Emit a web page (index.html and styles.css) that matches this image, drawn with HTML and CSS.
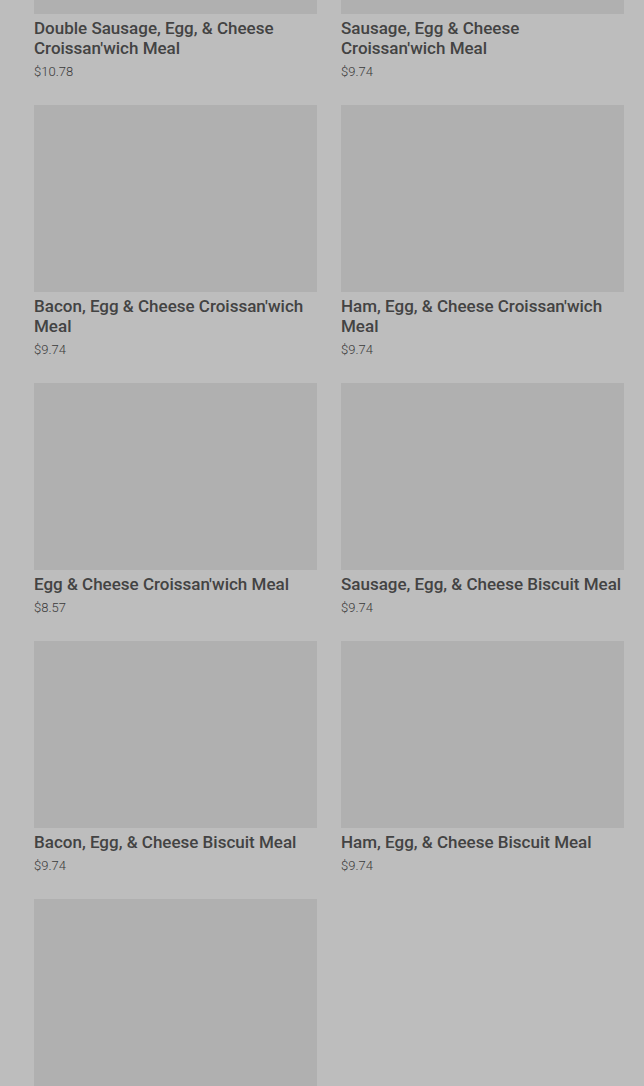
FILE: index.html
```html
<!DOCTYPE html>
<html lang="en">

<head>
    <meta charset="UTF-8">
    <meta name="viewport" content="width=device-width, initial-scale=1.0">
    <title>Breakfast Meals</title>
    <link rel="stylesheet" href="styles.css">
</head>

<body>

<div class="menu">
    <div class="item">
        <div class="photo"></div>
        <h3>Double Sausage, Egg, &amp; Cheese Croissan'wich Meal</h3>
        <p class="price">$10.78</p>
    </div>
    <div class="item">
        <div class="photo"></div>
        <h3>Sausage, Egg &amp; Cheese Croissan'wich Meal</h3>
        <p class="price">$9.74</p>
    </div>
    <div class="item">
        <div class="photo"></div>
        <h3>Bacon, Egg &amp; Cheese Croissan'wich Meal</h3>
        <p class="price">$9.74</p>
    </div>
    <div class="item">
        <div class="photo"></div>
        <h3>Ham, Egg, &amp; Cheese Croissan'wich Meal</h3>
        <p class="price">$9.74</p>
    </div>
    <div class="item">
        <div class="photo"></div>
        <h3>Egg &amp; Cheese Croissan'wich Meal</h3>
        <p class="price">$8.57</p>
    </div>
    <div class="item">
        <div class="photo"></div>
        <h3>Sausage, Egg, &amp; Cheese Biscuit Meal</h3>
        <p class="price">$9.74</p>
    </div>
    <div class="item">
        <div class="photo"></div>
        <h3>Bacon, Egg, &amp; Cheese Biscuit Meal</h3>
        <p class="price">$9.74</p>
    </div>
    <div class="item">
        <div class="photo"></div>
        <h3>Ham, Egg, &amp; Cheese Biscuit Meal</h3>
        <p class="price">$9.74</p>
    </div>
    <div class="item">
        <div class="photo"></div>
    </div>
</div>

</body>

</html>
```

FILE: styles.css
```css
html, body {
    margin: 0;
    background: #bdbdbd;
    font-family: Roboto, "Liberation Sans", sans-serif;
    color: #434343;
}

.menu {
    display: grid;
    grid-template-columns: 283px 283px;
    column-gap: 24px;
    row-gap: 25px;
    padding: 0 20px 40px 34px;
    margin-top: -173px;
}

.photo {
    height: 187px;
    background: #b0b0b0;
}

.item h3 {
    margin: 4px 0 0;
    font-size: 17px;
    font-weight: 500;
    line-height: 20px;
}

.price {
    margin: 6px 0 0;
    font-size: 13px;
    line-height: 16px;
    font-weight: 300;
    color: #3a3a3a;
}
```
